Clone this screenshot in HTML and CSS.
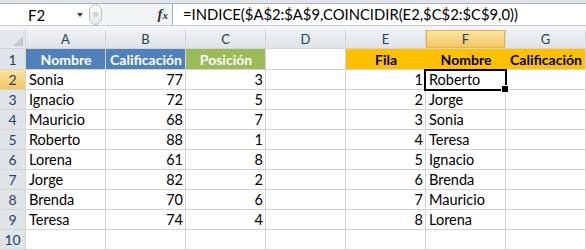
FILE: index.html
```html
<!DOCTYPE html>
<html lang="es">
<head>
<meta charset="utf-8">
<title>Excel INDICE COINCIDIR</title>
<link rel="stylesheet" href="styles.css">
</head>
<body>
<div class="fbar">
  <div class="fbar-inner">
    <div class="namebox"><span class="ref">F2</span><span class="caret"></span></div>
    <div class="grip"><span class="dot"></span></div>
    <div class="fxzone"><span class="fx">f<span class="fx-x">x</span></span></div>
    <div class="formula">=INDICE($A$2:$A$9,COINCIDIR(E2,$C$2:$C$9,0))</div>
  </div>
</div>
<div class="sheet">
  <div class="corner"></div>
  <div class="ch">A</div><div class="ch">B</div><div class="ch">C</div><div class="ch">D</div><div class="ch">E</div><div class="ch ch-sel">F</div><div class="ch">G</div>

  <div class="rh">1</div>
  <div class="c hd hd-blue">Nombre</div><div class="c hd hd-blue">Calificación</div><div class="c hd hd-green">Posición</div><div class="c"></div>
  <div class="c hd hd-orange join">Fila</div><div class="c hd hd-orange join sel-top">Nombre</div><div class="c hd hd-orange">Calificación</div>

  <div class="rh rh-sel">2</div>
  <div class="c">Sonia</div><div class="c n">77</div><div class="c n">3</div><div class="c"></div><div class="c n">1</div><div class="c sel">Roberto</div><div class="c"></div>

  <div class="rh">3</div>
  <div class="c">Ignacio</div><div class="c n">72</div><div class="c n">5</div><div class="c"></div><div class="c n">2</div><div class="c">Jorge</div><div class="c"></div>

  <div class="rh">4</div>
  <div class="c">Mauricio</div><div class="c n">68</div><div class="c n">7</div><div class="c"></div><div class="c n">3</div><div class="c">Sonia</div><div class="c"></div>

  <div class="rh">5</div>
  <div class="c">Roberto</div><div class="c n">88</div><div class="c n">1</div><div class="c"></div><div class="c n">4</div><div class="c">Teresa</div><div class="c"></div>

  <div class="rh">6</div>
  <div class="c">Lorena</div><div class="c n">61</div><div class="c n">8</div><div class="c"></div><div class="c n">5</div><div class="c">Ignacio</div><div class="c"></div>

  <div class="rh">7</div>
  <div class="c">Jorge</div><div class="c n">82</div><div class="c n">2</div><div class="c"></div><div class="c n">6</div><div class="c">Brenda</div><div class="c"></div>

  <div class="rh">8</div>
  <div class="c">Brenda</div><div class="c n">70</div><div class="c n">6</div><div class="c"></div><div class="c n">7</div><div class="c">Mauricio</div><div class="c"></div>

  <div class="rh">9</div>
  <div class="c">Teresa</div><div class="c n">74</div><div class="c n">4</div><div class="c"></div><div class="c n">8</div><div class="c">Lorena</div><div class="c"></div>

  <div class="rh">10</div>
  <div class="c"></div><div class="c"></div><div class="c"></div><div class="c"></div><div class="c"></div><div class="c"></div><div class="c"></div>
</div>
</body>
</html>
```

FILE: styles.css
```css
* { box-sizing: border-box; }
html, body { margin: 0; padding: 0; background: #ffffff; }
body {
  width: 586px;
  height: 250px;
  overflow: hidden;
  font-family: Lato, "Open Sans", sans-serif;
  color: #000;
}

/* formula bar */
.fbar {
  height: 30px;
  background: linear-gradient(#dfe4ea, #e6eaef 4px, #f3f5f8 26px);
  padding-top: 3px;
  padding-bottom: 4px;
}
.fbar-inner {
  display: flex;
  height: 23px;
  border-top: 1px solid #a9b1bb;
  border-bottom: 1px solid #c9ced6;
  background: #fff;
}
.namebox {
  width: 88px;
  display: flex;
  align-items: center;
  font-size: 15px;
}
.ref { margin-left: 28px; line-height: 16px; }
.caret {
  margin-left: auto;
  margin-right: 5px;
  width: 0; height: 0;
  border-left: 3.5px solid transparent;
  border-right: 3.5px solid transparent;
  border-top: 4px solid #444;
}
.grip {
  width: 13px;
  border: 1px solid #b8bec6;
  border-radius: 9px;
  background: linear-gradient(#fbfbfc, #e4e7eb);
  display: flex;
  justify-content: center;
  align-items: center;
  margin: 0 0 0 1px;
}
.dot { width: 5px; height: 5px; border-radius: 50%; background: #d6dade; box-shadow: inset 0 0 0 1px #c3c8cf; }
.fxzone {
  width: 71px;
  background: #f1f3f5;
  display: flex;
  align-items: center;
  justify-content: flex-end;
  padding-right: 4px;
  border-right: 1px solid #a9b1bb;
}
.fx {
  font-family: "Liberation Serif", serif;
  font-style: italic;
  font-weight: bold;
  font-size: 15px;
  color: #333;
  line-height: 14px;
}
.fx-x { font-size: 11px; }
.formula {
  flex: 1;
  padding-left: 10px;
  font-size: 14.8px;
  line-height: 21px;
  white-space: nowrap;
  overflow: hidden;
}

/* sheet grid */
.sheet {
  display: grid;
  grid-template-columns: 25px repeat(7, 79px);
  grid-template-rows: 18px 20px repeat(9, 19px);
  gap: 1px;
  background: #d4d4d4;
  width: 586px;
  padding-right: 1px;
  padding-bottom: 1px;
}
.corner {
  background: #e4e8ed;
  position: relative;
}
.corner::after {
  content: "";
  position: absolute;
  right: 2px; bottom: 2px;
  width: 0; height: 0;
  border-left: 10px solid transparent;
  border-bottom: 10px solid #c3c9d0;
}
.ch {
  background: linear-gradient(#eef1f5, #e0e4ea);
  color: #27415f;
  font-size: 13px;
  display: flex;
  align-items: center;
  justify-content: center;
  line-height: 14px;
}
.ch-sel {
  background: linear-gradient(#fbe5a8, #f3c55e);
  box-shadow: inset 0 0 0 1px #e1b54f;
}
.rh {
  background: #e1e5ea;
  color: #27415f;
  font-size: 14px;
  display: flex;
  align-items: flex-end;
  justify-content: center;
  line-height: 16px;
  padding-bottom: 1px;
}
.rh-sel {
  background: linear-gradient(#fbe3a3, #f4c862);
}
.c {
  background: #fff;
  font-size: 14.5px;
  line-height: 16px;
  display: flex;
  align-items: flex-end;
  padding: 0 2px 1px 3px;
  white-space: nowrap;
}
.n { justify-content: flex-end; }
.hd { justify-content: center; font-weight: bold; font-size: 14px; }
.hd-blue { background: #4f81bd; color: #fff; }
.hd-green { background: #9bbb59; color: #fff; }
.hd-orange { background: #ffc000; color: #000; }
.join { box-shadow: 1px 0 0 #ffc000; }
.sel-top { box-shadow: 1px 0 0 #ffc000, 0 1px 0 #1f4fd8; }
.sel { position: relative; }
.sel::before {
  content: "";
  position: absolute;
  left: -2px; top: -1px; right: -2px; bottom: -2px;
  border: 2px solid #000;
}
.sel::after {
  content: "";
  position: absolute;
  right: -4px; bottom: -4px;
  width: 6px; height: 6px;
  background: #000;
  border: 1px solid #fff;
}
```
